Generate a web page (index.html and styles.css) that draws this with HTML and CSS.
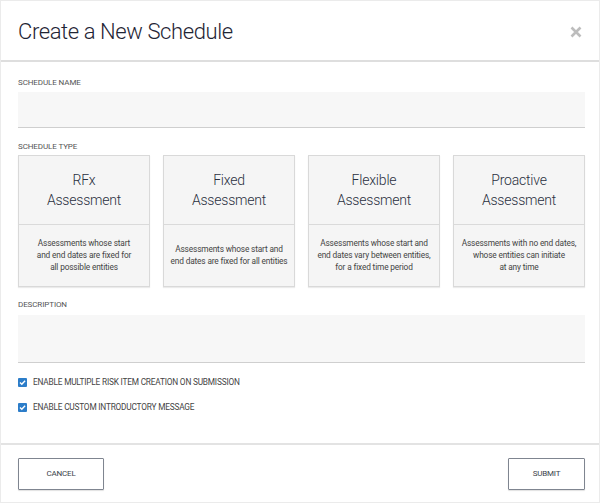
FILE: index.html
```html
<!DOCTYPE html>
<html>
<head>
<meta charset="utf-8">
<link rel="stylesheet" href="styles.css">
</head>
<body>
<div class="modal">
  <div class="header">
    <h1 class="title">Create a New Schedule</h1>
    <span class="close">
      <svg width="12" height="12" viewBox="0 0 12 12"><path d="M1.5 1.5L10.5 10.5M10.5 1.5L1.5 10.5" stroke="#bdbdbd" stroke-width="2.6" stroke-linecap="butt"/></svg>
    </span>
  </div>
  <div class="content">
    <div class="label label-first">SCHEDULE NAME</div>
    <div class="input"></div>
    <div class="label label-type">SCHEDULE TYPE</div>
    <div class="cards">
      <div class="card">
        <div class="card-top">RFx<br>Assessment</div>
        <div class="card-bottom">Assessments whose start<br>and end dates are fixed for<br>all possible entities</div>
      </div>
      <div class="card">
        <div class="card-top">Fixed<br>Assessment</div>
        <div class="card-bottom">Assessments whose start and<br>end dates are fixed for all entities</div>
      </div>
      <div class="card">
        <div class="card-top">Flexible<br>Assessment</div>
        <div class="card-bottom">Assessments whose start and<br>end dates vary between entities,<br>for a fixed time period</div>
      </div>
      <div class="card">
        <div class="card-top">Proactive<br>Assessment</div>
        <div class="card-bottom">Assessments with no end dates,<br>whose entities can initiate<br>at any time</div>
      </div>
    </div>
    <div class="label label-desc">DESCRIPTION</div>
    <div class="input textarea"></div>
    <div class="check check-first">
      <span class="box"><svg width="9" height="9" viewBox="0 0 9 9"><path d="M2 4.6L3.8 6.3L7.1 2.8" stroke="#fff" stroke-width="1.4" fill="none"/></svg></span>
      <span>ENABLE MULTIPLE RISK ITEM CREATION ON SUBMISSION</span>
    </div>
    <div class="check">
      <span class="box"><svg width="9" height="9" viewBox="0 0 9 9"><path d="M2 4.6L3.8 6.3L7.1 2.8" stroke="#fff" stroke-width="1.4" fill="none"/></svg></span>
      <span>ENABLE CUSTOM INTRODUCTORY MESSAGE</span>
    </div>
  </div>
  <div class="footer">
    <button class="btn btn-cancel">CANCEL</button>
    <button class="btn btn-submit">SUBMIT</button>
  </div>
</div>
</body>
</html>
```
FILE: styles.css
```css
* { box-sizing: border-box; }
html, body { margin: 0; padding: 0; background: #fff; }
body { width: 600px; height: 504px; font-family: Roboto, "Noto Sans", sans-serif; color: #333; }
.modal {
  width: 600px;
  height: 503px;
  border: 1px solid #ebebeb;
  display: flex;
  flex-direction: column;
}
.header {
  height: 61px;
  border-bottom: 2px solid #dedede;
  display: flex;
  align-items: center;
  justify-content: space-between;
  padding: 0 17px 0 17px;
  flex-shrink: 0;
}
.title {
  margin: 0;
  font-size: 22px;
  font-weight: 300;
  color: #1f2535;
  letter-spacing: -0.4px;
  position: relative;
  top: 1px;
}
.close { display: flex; margin-top: 2px; margin-right: 0; }
.content {
  padding: 0 14px 0 17px;
  flex: 1;
}
.label {
  font-size: 8px;
  line-height: 10px;
  color: #555;
  letter-spacing: -0.1px;
}
.label-first { margin-top: 16px; margin-bottom: 4px; }
.label-type { margin-top: 14px; margin-bottom: 3px; }
.label-desc { margin-top: 13px; margin-bottom: 5px; }
.input {
  height: 36px;
  background: #f7f7f7;
  border-bottom: 1px solid #cfcfcf;
}
.textarea { height: 48px; }
.cards {
  display: grid;
  grid-template-columns: repeat(4, 132px);
  column-gap: 13px;
}
.card {
  height: 132px;
  background: #f5f5f5;
  border: 1px solid #d9d9d9;
  box-shadow: 0 1px 1px rgba(0,0,0,0.08);
  display: flex;
  flex-direction: column;
}
.card-top {
  height: 69px;
  border-bottom: 1px solid #dadada;
  display: flex;
  align-items: center;
  justify-content: center;
  text-align: center;
  font-size: 14px;
  line-height: 20px;
  color: #2a3040;
  font-weight: 300;
  letter-spacing: -0.2px;
}
.card-bottom {
  flex: 1;
  display: flex;
  align-items: center;
  justify-content: center;
  text-align: center;
  font-size: 8.3px;
  line-height: 12px;
  color: #444;
  letter-spacing: -0.15px;
  padding-bottom: 1px;
}
.check {
  display: flex;
  align-items: center;
  gap: 6px;
  font-size: 8.3px;
  color: #444;
  letter-spacing: -0.2px;
  height: 10px;
  margin-top: 15px;
}
.check-first { margin-top: 14px; }
.box {
  width: 9px;
  height: 9px;
  background: #2c7dc9;
  border-radius: 1px;
  display: flex;
  flex-shrink: 0;
}
.footer {
  height: 59px;
  border-top: 2px solid #e3e3e3;
  display: flex;
  align-items: center;
  justify-content: space-between;
  padding: 0 14px 0 17px;
  flex-shrink: 0;
}
.btn {
  height: 32px;
  background: #fff;
  border: 1px solid #7f8590;
  box-shadow: 0 1px 1px rgba(0,0,0,0.12);
  font-family: Roboto, "Noto Sans", sans-serif;
  font-size: 8px;
  letter-spacing: -0.2px;
  color: #3a3f4a;
  padding: 0;
  border-radius: 1px;
}
.btn-cancel { width: 86px; }
.btn-submit { width: 77px; }
```
